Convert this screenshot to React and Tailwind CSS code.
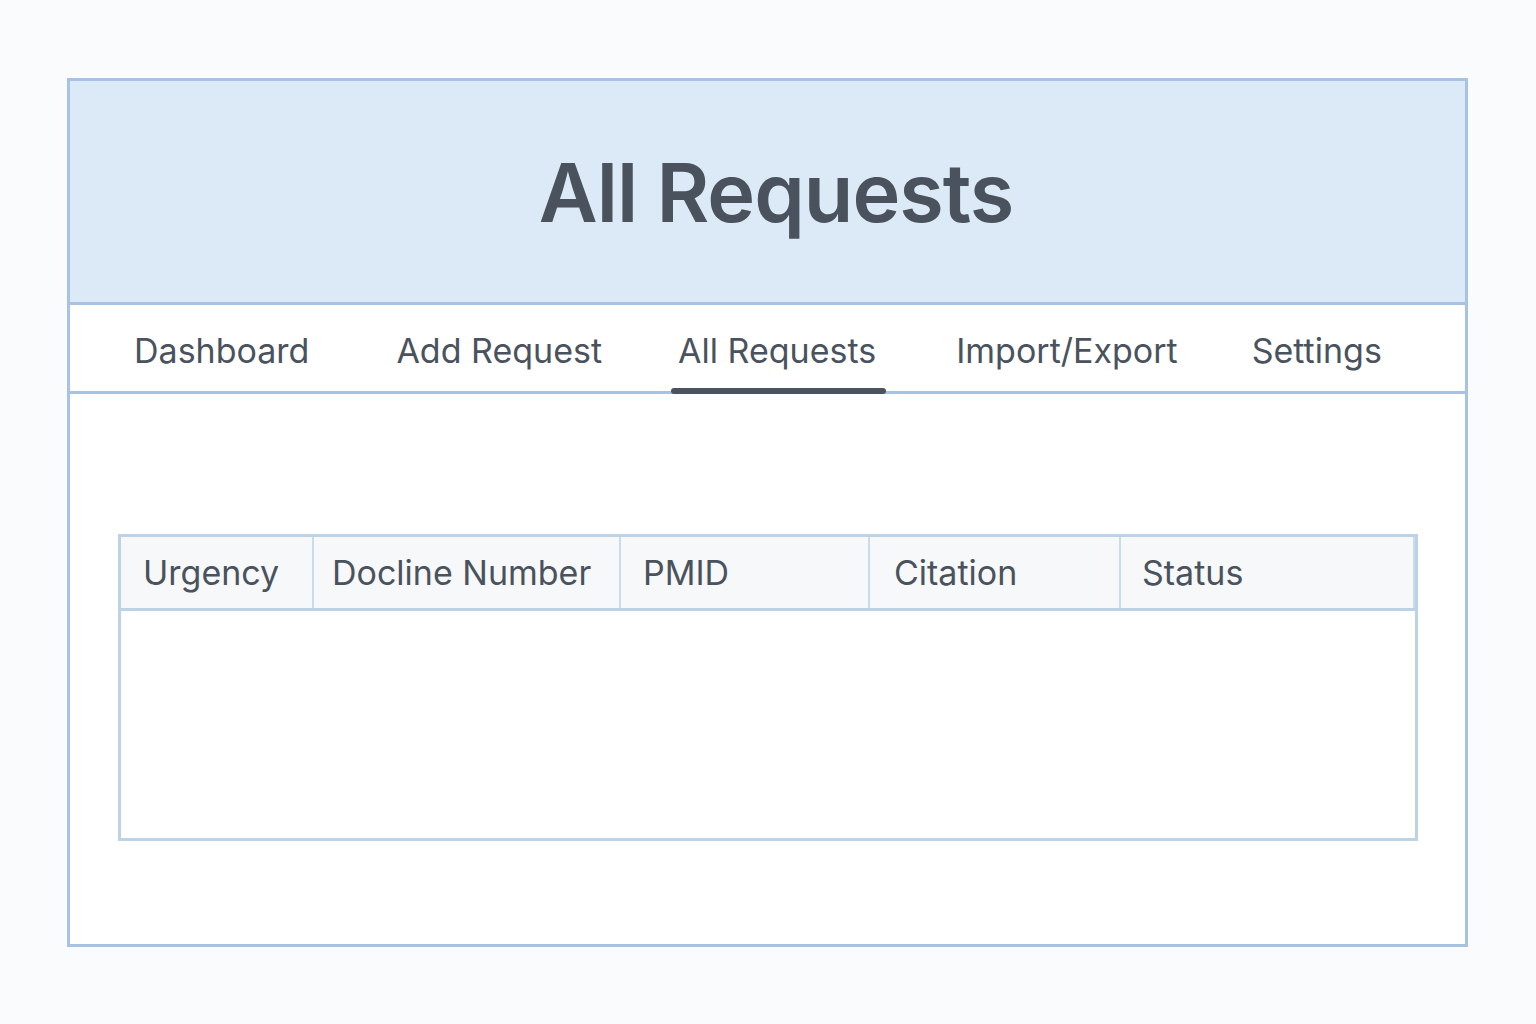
import React from 'react';

const tabs = [
  { label: 'Dashboard', cls: 'ml-[57px]' },
  { label: 'Add Request', cls: 'ml-[73px]' },
  { label: 'All Requests', cls: 'ml-[62px]', active: true },
  { label: 'Import/Export', cls: 'ml-[66px]' },
  { label: 'Settings', cls: 'ml-[60px]' },
];

const columns = [
  { label: 'Urgency', cls: 'w-[193px] pl-[22px]' },
  { label: 'Docline Number', cls: 'w-[307px] pl-[18px]' },
  { label: 'PMID', cls: 'w-[249px] pl-[22px]' },
  { label: 'Citation', cls: 'w-[251px] pl-[24px]' },
  { label: 'Status', cls: 'flex-1 border-r-0 pl-[21px]' },
];

export default function App() {
  return (
    <div
      className="min-h-screen bg-[#fafbfc] pt-[78px] px-[67px] text-[#4a535d]"
      style={{ fontFamily: 'Inter, "Liberation Sans", sans-serif' }}
    >
      <div className="w-[1401px] h-[869px] bg-white border-[3px] border-[#a7c2e3] flex flex-col">
        {/* header */}
        <div className="h-[224px] shrink-0 bg-[#dce9f6] border-b-[3px] border-[#a7c2e3] flex items-center justify-center">
          <h1 className="text-[81px] font-semibold tracking-[-1px] leading-none pt-[4px] pl-[17px]">All Requests</h1>
        </div>

        {/* tabs */}
        <nav className="h-[89px] shrink-0 border-b-[3px] border-[#a7c2e3] flex items-stretch">
          {tabs.map((t) => (
            <div key={t.label} className={`${t.cls} relative flex items-center px-[7px]`}>
              <span className="text-[34px] leading-none pt-[5px]">{t.label}</span>
              {t.active && (
                <div className="absolute left-0 right-[-3px] bottom-[-3px] h-[6px] rounded-full bg-[#4b545e]" />
              )}
            </div>
          ))}
        </nav>

        {/* content */}
        <div className="pt-[140px] pl-[48px]">
          <div className="w-[1300px] h-[307px] border-[3px] border-[#bcd3e7] flex flex-col">
            <div className="h-[74px] bg-[#f6f8fa] border-b-[3px] border-[#bcd3e7] flex">
              {columns.map((c) => (
                <div
                  key={c.label}
                  className={`${c.cls} border-r-2 border-[#c9dcec] flex items-center`}
                >
                  <span className="text-[34px] leading-none">{c.label}</span>
                </div>
              ))}
            </div>
            <div className="flex-1" />
          </div>
        </div>
      </div>
    </div>
  );
}
